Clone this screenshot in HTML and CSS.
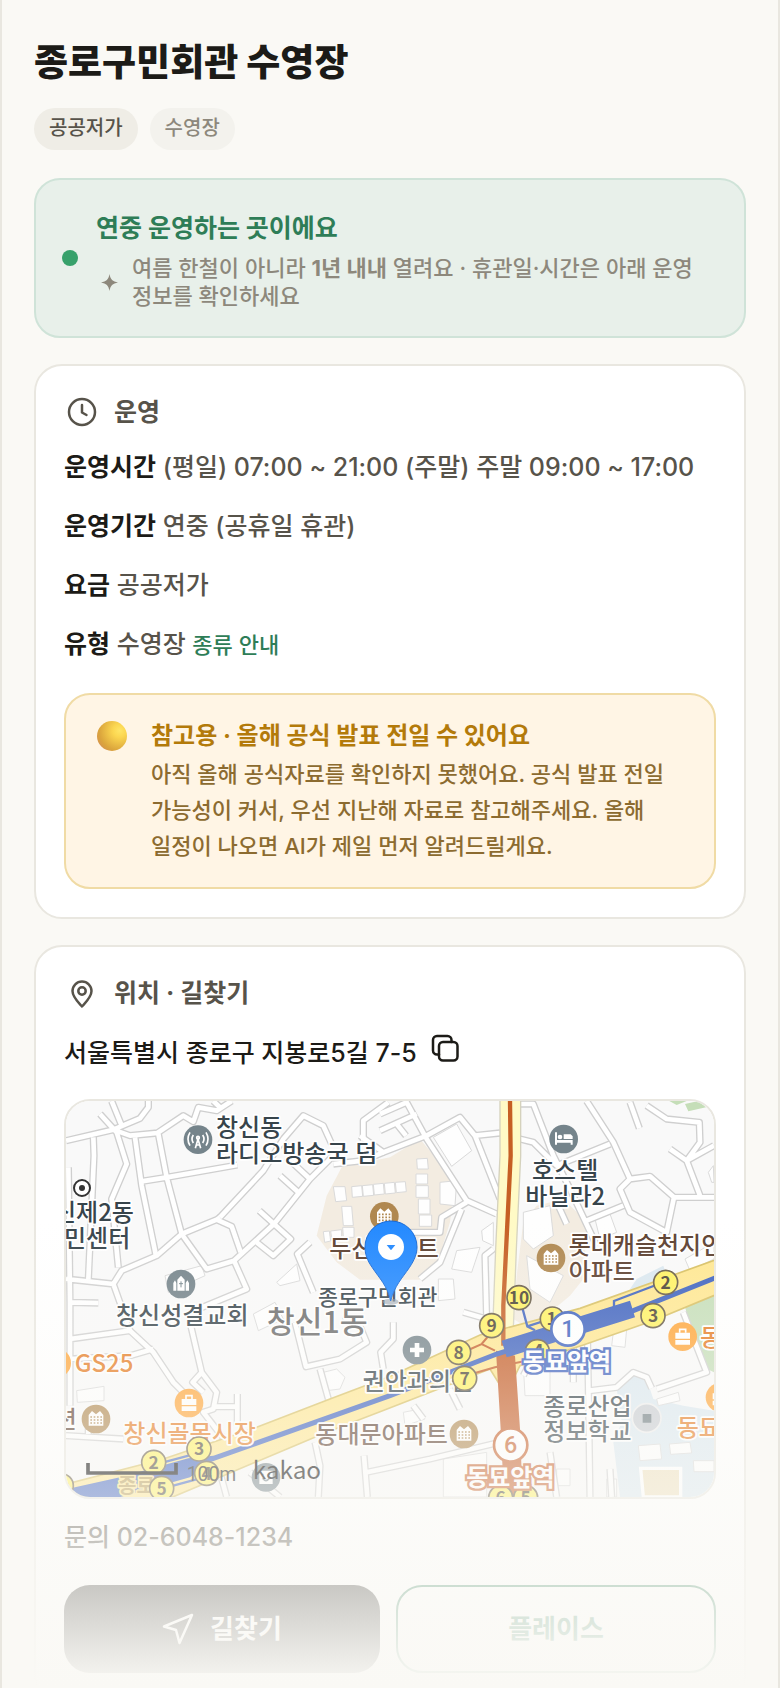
FILE: index.html
```html
<!DOCTYPE html>
<html lang="ko">
<head>
<meta charset="utf-8">
<meta name="viewport" content="width=device-width, initial-scale=1">
<title>종로구민회관 수영장</title>
<link rel="stylesheet" href="styles.css">
</head>
<body>
<main class="page">
  <h1 class="title">종로구민회관 수영장</h1>
  <div class="chips">
    <span class="chip chip-strong">공공저가</span>
    <span class="chip">수영장</span>
  </div>

  <section class="banner">
    <span class="banner-dot"></span>
    <div>
      <h2 class="banner-title">연중 운영하는 곳이에요</h2>
      <div class="banner-note">
        <svg class="spark" viewBox="0 0 24 24" aria-hidden="true"><path d="M12 0C13.200 7.500 16.500 10.800 24 12C16.500 13.200 13.200 16.500 12 24C10.800 16.500 7.500 13.200 0 12C7.500 10.800 10.800 7.500 12 0Z"/></svg>
        <p>여름 한철이 아니라 <b>1년 내내</b> 열려요 · 휴관일·시간은 아래 운영 정보를 확인하세요</p>
      </div>
    </div>
  </section>

  <section class="card">
    <h2 class="card-title">
      <svg class="icon" viewBox="0 0 36 36" aria-hidden="true"><circle cx="18" cy="18" r="13"/><path d="M18 11V18.500L22.500 21"/></svg>
      운영
    </h2>
    <div class="rows">
      <p><b>운영시간</b> (평일) 07:00 ~ 21:00 (주말) 주말 09:00 ~ 17:00</p>
      <p><b>운영기간</b> 연중 (공휴일 휴관)</p>
      <p><b>요금</b> 공공저가</p>
      <p><b>유형</b> 수영장 <a class="guide" href="#types">종류 안내</a></p>
    </div>
    <div class="notice">
      <span class="ball"></span>
      <div>
        <h3 class="notice-title">참고용 · 올해 공식 발표 전일 수 있어요</h3>
        <p>아직 올해 공식자료를 확인하지 못했어요. 공식 발표 전일 가능성이 커서, 우선 지난해 자료로 참고해주세요. 올해 일정이 나오면 AI가 제일 먼저 알려드릴게요.</p>
      </div>
    </div>
  </section>

  <section class="card">
    <h2 class="card-title">
      <svg class="icon" viewBox="0 0 36 36" aria-hidden="true"><path d="M18 31.500C14 27 8.500 22 8.500 16A9.500 9.500 0 0 1 27.500 16C27.500 22 22 27 18 31.500Z"/><circle cx="18" cy="16" r="3.700"/></svg>
      위치 · 길찾기
    </h2>
    <div class="address">
      <span>서울특별시 종로구 지봉로5길 7-5</span>
      <button class="copy" type="button" aria-label="주소 복사"><svg viewBox="0 0 28 28" aria-hidden="true"><rect x="8" y="8" width="18.500" height="18.500" rx="4"/><path d="M8 20.500H6A4 4 0 0 1 2 16.500V6A4 4 0 0 1 6 2H16.500A4 4 0 0 1 20.500 6V8"/></svg></button>
    </div>

    <div class="map">
      <svg viewBox="48 36 1944 1188" role="img" aria-label="종로구민회관 지도">
        <defs>
          <g id="roads">
            <path d="M48 155L190 122L270 88L295 55V36M185 36L215 110M150 75L200 130L230 225L185 330L205 535M130 145L132 200L115 572M190 122L240 140L322 132L400 80L430 98L445 55L500 65L545 36M490 36L515 60"/>
            <path d="M255 145L275 290L318 500M325 135L350 265L395 435L470 540L552 515L672 405L780 270L860 190M275 277L350 265L562 228M510 385L640 245L700 150L760 80L820 110L845 165M745 310L690 260M780 270L710 205M740 215L700 160"/>
            <path d="M48 570L190 585L215 545L320 500L395 435L500 392L545 412L572 490M190 585L240 725L60 750M552 515L590 600L420 670M620 460L670 500L722 450L672 405L628 365M510 385L500 392M850 225L940 215L1000 190M780 460L742 495L790 610M940 155V95L1015 40M55 235L60 640M60 640V950M60 640L145 642M60 810L240 800L310 780"/>
            <path d="M240 725L310 790L370 880L420 930M420 700L455 850L500 910L490 960L460 970L530 1060M490 953H562M562 915V1010M455 850L428 880L460 910M735 700L768 833L870 810L950 760L925 700L880 680M810 840L835 930M1000 840L992 790L1030 750V700M48 1040L220 1050M795 1060L810 1130L805 1224M942 1100L952 1224M940 1152L1140 1110L1340 1062M510 1150L530 1224M600 1150L690 1224M115 1035V970"/>
            <path d="M990 75L1070 40L1130 150L1250 335L1340 375M990 125L1100 75M1040 105L1068 140M930 140L1000 190L1130 140L1230 85L1275 140L1350 330M1275 140L1350 132M1250 340L1175 385L1170 430H1050M1235 360L1170 520L1110 570M1330 480L1305 500L1310 690L1240 670M1400 330L1345 345"/>
            <path d="M1410 45H1450L1510 200L1560 300L1640 470M1410 150L1450 160L1520 230L1680 165M1610 36L1690 160L1740 270L1710 300L1740 370L1850 430L1872 325L1800 262L1740 270M1872 325L1992 325M1790 50L1850 90L1948 100L1950 160L1910 215L1950 320M1860 180L1910 215L1992 170M1740 40L1768 118M1610 395L1720 350M1525 350L1550 405"/>
            <path d="M1612 720L1615 890L1620 1224M1620 905L1700 895L1750 850L1790 865L1805 898M1820 900L1970 850L1900 670M1500 1090L1520 1224M1570 730V880M1420 860L1440 820L1500 790M1090 950L1120 990M1200 900L1230 960M1680 1140L1685 1224"/>
          </g>
          <g id="apt">
            <circle r="43"/>
            <path fill="#fff" d="M-22 20V-12L-12 -24L0 -14L12 -24L22 -12V20Z"/>
            <path stroke="currentColor" stroke-width="5" stroke-dasharray="5 5" d="M-17 -6H19M-17 3H19M-17 12H19"/>
          </g>
          <g id="bag">
            <circle r="43" fill="#ffa538"/>
            <path fill="#fff" d="M-22 -12H22V6H-22ZM-22 10H22V24H-22Z"/>
            <path fill="none" stroke="#fff" stroke-width="5" d="M-9 -12V-22H9V-12"/>
          </g>
        </defs>

        <rect class="land" x="48" y="36" width="1944" height="1188"/>
        <path class="estate" d="M875 235L1020 205L1110 150L1215 275L1200 400L1160 530L1110 572H930L860 520L800 440L830 320ZM1160 230L1215 290L1180 390ZM1420 400L1460 350L1540 330L1612 400L1600 570L1560 620L1440 720L1390 690L1400 560Z"/>
        <path class="park" d="M1905 655L1992 620V850L1960 835ZM1858 36H1910L1880 48ZM1905 45L1945 36L1968 55L1915 67Z"/>
        <path class="school" d="M1715 1000L1700 900L1740 850L1790 870L1810 930L1900 950L1992 965V1224H1710L1690 1060ZM1740 600L1760 570L1840 530L1850 560L1770 610Z"/>
        <path class="court" d="M1772 1138H1892V1224H1780Z"/>

        <g class="building">
          <path d="M850 293H885L890 335L857 338ZM905 293L935 290L938 322L907 325ZM937 290L968 287L971 319L940 322ZM970 286L1000 283L1003 315L973 318ZM1003 283L1033 280L1036 312L1006 315ZM1036 280L1066 278L1069 308L1039 311ZM875 352H905L910 410H880ZM820 428L838 426L842 456L824 460ZM842 426L875 422V452L846 456ZM878 415H912V445H880Z"/>
          <path d="M1100 210L1132 208L1135 240H1102ZM1098 255H1133V285H1098ZM1098 290H1135V325H1098ZM1105 330H1140V375H1105ZM1108 378H1145V412H1108ZM1150 145L1220 105L1265 185L1205 232ZM1170 280L1220 275L1215 350L1170 345Z"/>
          <path d="M345 560L455 530L465 560L355 610ZM680 580L740 525L750 575L690 590ZM80 905L162 892V935L82 940ZM610 675L675 640L700 690L625 725ZM820 850L860 840L885 865L870 900L830 905Z"/>
          <path d="M1295 425L1330 400V470L1298 455ZM1220 485L1290 475L1265 550L1205 540ZM1165 570L1210 570L1215 630L1165 635ZM1420 370L1500 350L1510 440L1450 480L1420 450ZM1430 500L1540 560L1500 640L1440 600ZM1635 390L1680 375L1700 430L1650 450ZM1990 230L1975 250L1985 280H1992ZM1905 510L1992 460V510L1920 545Z"/>
          <path d="M1690 730L1730 720L1725 775L1685 770ZM1420 830L1500 810V920H1425ZM1765 1070L1830 1065L1835 1110L1770 1115ZM1858 1065L1920 1060L1925 1092L1862 1096ZM1930 1115H1992V1148H1932ZM1820 930L1885 910L1890 935L1825 950ZM1520 1140H1560V1190H1520ZM1180 1110L1310 1090V1224H1180ZM1060 970L1110 960L1125 990L1065 1010ZM1670 1170H1700V1224H1670Z"/>
        </g>

        <use href="#roads" class="road-edge"/>
        <use href="#roads" class="road-fill"/>

        <path class="avenue-edge" d="M1381 30V200L1368 480L1356 800"/>
        <path class="avenue" d="M1381 30V200L1368 480L1356 800"/>
        <path class="highway" d="M30 1190L340 1110L620 1015L840 930L1020 862L1290 738L1590 658L2010 508V612L1809 695L1600 768L1410 830L1375 900L1345 880L1320 840L990 968L830 1030L520 1160L330 1240H30Z"/>
        <path class="line6" d="M1380 36L1382 200L1360 650V770"/>
        <path class="line6-wide" d="M1338 785L1395 800L1410 1020L1418 1224H1362L1352 1020Z"/>
        <path class="line6-link" d="M1255 783L1295 765L1335 785M1295 765L1320 735M1275 852L1335 835L1430 815"/>
        <path class="line1" d="M400 1140L480 1112L1020 920L1340 795L1750 665L2000 565"/>
        <path class="line1-block" d="M1355 755L1740 635L1755 685L1370 805ZM30 1205L210 1165L415 1108L490 1100L470 1130L420 1165L190 1230H30Z"/>
        <path class="line1-link" d="M1692 655V636L1850 576M1418 660L1432 712L1455 724M1432 712L1500 690M340 1120L430 1096M370 1190L450 1168"/>

        <g class="poi">
          <circle cx="444" cy="152" r="43"/>
          <circle cx="393" cy="585" r="43"/>
          <circle cx="1541" cy="150" r="43"/>
          <circle cx="1101" cy="783" r="43"/>
          <circle cx="648" cy="1165" r="43"/>
        </g>
        <g class="glyph-line">
          <path d="M436 178L444 150L452 178M438 168H450M430 138Q422 150 430 162M458 138Q466 150 458 162M420 130Q408 150 420 170M468 130Q480 150 468 170"/>
          <circle cx="444" cy="146" r="4"/>
        </g>
        <path class="glyph" d="M382 605V572L393 560L404 572V605ZM370 605V582L375 574L379 582V605ZM407 605V582L412 574L417 582V605ZM1515 130H1521V153H1568V167H1562V161H1521V167H1515ZM1541 136H1562L1568 142V150H1541ZM1094 762H1108V776H1122V790H1108V804H1094V790H1080V776H1094ZM628 1145H668V1185H628Z"/>
        <circle class="glyph" cx="1530" cy="144" r="7"/>
        <path class="church-cross" d="M393 577V595M387 584H399"/>
        <path class="smile" d="M638 1168Q648 1182 658 1168M638 1154V1158M658 1154V1158"/>
        <g class="target"><circle cx="96" cy="297" r="24"/><circle class="target-core" cx="96" cy="297" r="9"/></g>
        <g class="apt">
          <use href="#apt" x="1003" y="382"/>
          <use href="#apt" x="1503" y="507"/>
          <use href="#apt" x="138" y="990"/>
          <use href="#apt" x="1242" y="1035"/>
        </g>
        <use href="#bag" x="417" y="942"/>
        <use href="#bag" x="1898" y="743"/>
        <use href="#bag" x="20" y="822"/>
        <use href="#bag" x="2010" y="925"/>
        <circle class="campus" cx="1790" cy="987" r="43"/>
        <path class="campus-core" d="M1778 975H1804V1001H1778Z"/>

        <g class="label">
          <text x="498" y="142">창신동</text>
          <text x="498" y="220">라디오방송국 덤</text>
          <text x="12" y="396">신제2동</text>
          <text x="42" y="474">민센터</text>
          <text x="198" y="704">창신성결교회</text>
          <text x="1446" y="270">호스텔</text>
          <text x="1426" y="348">바닐라2</text>
          <text x="938" y="902">권안과의원</text>
          <text x="1480" y="978">종로산업</text>
          <text x="1480" y="1054">정보학교</text>
          <text class="place" x="804" y="647">종로구민회관</text>
        </g>
        <g class="label label-brown">
          <text x="838" y="504">두산</text>
          <text x="1100" y="504">트</text>
          <text x="1556" y="496">롯데캐슬천지인</text>
          <text x="1556" y="574">아파트</text>
          <text x="14" y="1018">션</text>
          <text x="796" y="1062">동대문아파트</text>
        </g>
        <g class="label label-orange">
          <text x="74" y="848">GS25</text>
          <text x="220" y="1060">창신골목시장</text>
          <text x="1950" y="772">동</text>
          <text x="1880" y="1040">동묘</text>
        </g>
        <text class="label district" x="650" y="732">창신1동</text>
        <text class="label street" x="204" y="1212">종로</text>

        <g class="exit">
          <circle cx="1847" cy="580" r="36"/><text x="1847" y="599">2</text>
          <circle cx="1809" cy="680" r="36"/><text x="1809" y="699">3</text>
          <circle cx="1407" cy="626" r="36"/><text x="1407" y="645">10</text>
          <circle cx="1507" cy="690" r="36"/><text x="1505" y="709">1</text>
          <circle cx="1325" cy="710" r="36"/><text x="1325" y="729">9</text>
          <circle cx="1226" cy="790" r="36"/><text x="1226" y="809">8</text>
          <circle cx="1244" cy="868" r="36"/><text x="1244" y="887">7</text>
          <circle cx="1462" cy="788" r="36"/><text x="1465" y="803">4</text>
          <circle cx="311" cy="1120" r="36"/><text x="311" y="1139">2</text>
          <circle cx="447" cy="1080" r="36"/><text x="447" y="1099">3</text>
          <circle cx="470" cy="1153" r="36"/><text x="470" y="1172">4</text>
          <circle cx="335" cy="1198" r="36"/><text x="335" y="1217">5</text>
          <circle cx="34" cy="1190" r="36"/>
          <circle cx="1352" cy="1226" r="36"/><text x="1352" y="1245">6</text>
          <circle cx="1427" cy="1226" r="36"/><text x="1427" y="1245">5</text>
        </g>
        <g class="station station-one"><circle cx="1554" cy="720" r="50"/><text x="1554" y="745">1</text><text class="station-name" x="1551" y="844">동묘앞역</text></g>
        <g class="station station-six"><circle cx="1382" cy="1068" r="50"/><text x="1382" y="1093">6</text><text class="station-name" x="1381" y="1192">동묘앞역</text></g>

        <ellipse class="pin-shadow" cx="1022" cy="638" rx="24" ry="9"/>
        <path class="pin" d="M1022 636C1012 590 988 568 967 536C950 512 945 494 945 474A78 78 0 0 1 1101 474C1101 494 1094 512 1078 536C1056 568 1034 590 1022 636Z"/>
        <circle class="glyph" cx="1023" cy="474" r="39"/>
        <path class="pin-mark" d="M1010 468H1036L1023 484Z"/>

        <path class="scale" d="M114 1122V1152H378V1122"/>
        <text class="scale-text" x="410" y="1176">100m</text>
        <text class="brand" x="608" y="1171">kakao</text>
      </svg>
    </div>

    <p class="contact">문의 02-6048-1234</p>
    <div class="actions">
      <button class="btn btn-dark" type="button">
        <svg viewBox="0 0 32 32" aria-hidden="true"><path d="M30 2L2 13.500L14 17L17.500 30Z"/></svg>
        길찾기
      </button>
      <button class="btn btn-line" type="button">플레이스</button>
    </div>
  </section>
  <div class="fade"></div>
</main>
</body>
</html>
```
FILE: styles.css
```css
* { box-sizing: border-box; }

body {
  margin: 0;
  background: #faf9f5;
  color: #57534a;
  font-family: Inter, "Noto Sans CJK KR", sans-serif;
  font-size: 25px;
  line-height: 40px;
  font-weight: 500;
  word-break: keep-all;
}

h1, h2, h3, p { margin: 0; }
b { font-weight: 700; }
button { font: inherit; cursor: pointer; }

.page {
  position: relative;
  height: 100vh;
  overflow: hidden;
  padding: 32px 32px 0;
  border: solid #e9e7e0;
  border-width: 0 2px;
}

.title {
  color: #1c1b17;
  font-size: 37px;
  line-height: 62px;
  font-weight: 800;
}

.chips {
  display: flex;
  gap: 12px;
  margin: 14px 0 28px;
}
.chip {
  padding: 4px 15px 6px;
  border-radius: 21px;
  background: #f3f2ed;
  color: #8d887c;
  font-size: 20px;
  line-height: 32px;
}
.chip-strong { background: #efede6; color: #57534a; }

.banner {
  display: flex;
  align-items: center;
  gap: 18px;
  padding: 26px;
  border: 2px solid #cfe3d8;
  border-radius: 26px;
  background: #e8f0ea;
}
.banner-dot {
  flex: none;
  width: 16px;
  height: 16px;
  border-radius: 50%;
  background: #37a16b;
}
.banner-title {
  color: #2e7d57;
  font-size: 25px;
  line-height: 44px;
  font-weight: 700;
}
.banner-note {
  display: flex;
  align-items: center;
  gap: 14px;
  margin-top: 4px;
  padding-left: 5px;
  color: #8d887c;
  font-size: 22px;
  line-height: 28px;
}
.spark { flex: none; width: 17px; height: 17px; fill: currentColor; }

.card {
  margin-top: 26px;
  padding: 26px 28px 28px;
  border: 2px solid #e9e7e0;
  border-radius: 28px;
  background: #fff;
}
.card-title {
  display: flex;
  align-items: center;
  gap: 14px;
  font-size: 25px;
  line-height: 40px;
  font-weight: 700;
}
.icon {
  width: 36px;
  height: 36px;
  fill: none;
  stroke: currentColor;
  stroke-width: 2.5;
  stroke-linecap: round;
  stroke-linejoin: round;
}

.rows { display: grid; gap: 19px; margin-top: 15px; }
.rows b { color: #1c1b17; }
.guide { color: #2e7d57; font-size: 22px; text-decoration: none; }

.notice {
  display: flex;
  align-items: flex-start;
  gap: 24px;
  margin-top: 28px;
  padding: 21px 31px 23px;
  border: 2px solid #f0dba5;
  border-radius: 26px;
  background: #fff5e5;
  color: #8c6b30;
  font-size: 22px;
  line-height: 36px;
}
.notice-title { color: #b37a0a; font-size: 24px; line-height: 40px; font-weight: 700; }
.ball {
  flex: none;
  width: 30px;
  height: 30px;
  margin-top: 5px;
  border-radius: 50%;
  background: radial-gradient(circle at 75% 32%, #ffe566 0, #fbd650 22%, #dba53c 66%, #d28a55 92%);
}

.address {
  display: flex;
  align-items: center;
  gap: 14px;
  margin-top: 20px;
  color: #1c1b17;
}
.copy {
  display: flex;
  padding: 0 0 10px;
  border: 0;
  background: none;
  color: inherit;
}
.copy svg {
  width: 28px;
  height: 28px;
  fill: none;
  stroke: currentColor;
  stroke-width: 2.5;
  stroke-linecap: round;
}

.map {
  overflow: hidden;
  margin-top: 26px;
  border: 2px solid #e9e7e0;
  border-radius: 26px;
}
.map svg { display: block; width: 100%; height: auto; }

.land { fill: #f9f9f9; }
.estate { fill: #f3ece1; }
.park { fill: #c5deb8; }
.school { fill: #dbe8f0; }
.court { fill: #eee0bd; stroke: #fff; stroke-width: 10; }
.building { fill: #fefefe; stroke: #dadada; stroke-width: 3; }
.road-edge { fill: none; stroke: #cfcfcf; stroke-width: 22; stroke-linejoin: round; }
.road-fill { fill: none; stroke: #fff; stroke-width: 14; stroke-linejoin: round; }
.avenue-edge { fill: none; stroke: #d5d2bd; stroke-width: 66; }
.avenue { fill: none; stroke: #fffac6; stroke-width: 58; }
.highway { fill: #ffe791; stroke: #d8c062; stroke-width: 5; }
.line6 { fill: none; stroke: #c65f24; stroke-width: 13; }
.line6-wide { fill: #c65f2a; }
.line6-link { fill: none; stroke: #c65f2a; stroke-width: 6; }
.line1 { fill: none; stroke: #3e62bf; stroke-width: 15; }
.line1-block { fill: #3e62bf; }
.line1-link { fill: none; stroke: #3e62bf; stroke-width: 7; }

.poi { fill: #75848b; }
.glyph { fill: #fff; }
.glyph-line { fill: none; stroke: #fff; stroke-width: 5; }
.church-cross { stroke: #75848b; stroke-width: 3; }
.smile { fill: none; stroke: #75848b; stroke-width: 5; }
.target { fill: #fff; stroke: #333; stroke-width: 6; }
.target-core { fill: #333; stroke: none; }
.apt { fill: #b08850; color: #b08850; }
.campus { fill: #c8ccd2; stroke: #eee; stroke-width: 5; }
.campus-core { fill: #6e7b81; }

.label {
  fill: #37444b;
  stroke: #fff;
  stroke-width: 10;
  stroke-linejoin: round;
  paint-order: stroke;
  font-family: "Noto Sans CJK KR", sans-serif;
  font-size: 72px;
  font-weight: 500;
}
.place { font-size: 65px; }
.label-brown { fill: #5c4030; }
.label-orange { fill: #e57a20; }
.district { fill: #6b6b6b; font-size: 91px; }
.street { fill: #b79a50; stroke: #ffe791; font-size: 60px; font-weight: 700; }

.exit circle { fill: #fff262; stroke: #665a45; stroke-width: 5; }
.exit text {
  fill: #4a4232;
  font-family: "Noto Sans CJK KR", sans-serif;
  font-size: 52px;
  font-weight: 700;
  text-anchor: middle;
}
.station text { font-family: Roboto, sans-serif; font-size: 70px; font-weight: 500; text-anchor: middle; }
.station circle { fill: #fff; stroke-width: 8; }
.station-one { fill: #3e62bf; }
.station-one circle, .station-one .station-name { stroke: #3e62bf; }
.station-six { fill: #c65f2a; }
.station-six circle, .station-six .station-name { stroke: #c65f2a; }
.station .station-name {
  fill: #fff;
  stroke-width: 14;
  paint-order: stroke;
  font-family: "Noto Sans CJK KR", sans-serif;
  font-size: 72px;
  font-weight: 700;
}

.pin { fill: #2389ff; stroke: #1769d6; stroke-width: 3; }
.pin-mark { fill: #2389ff; }
.pin-shadow { fill: #8b97a5; opacity: 0.6; }
.scale { fill: none; stroke: #000; stroke-width: 11; }
.scale-text { fill: #222; font-family: Roboto, sans-serif; font-size: 58px; font-weight: 400; }
.brand { fill: #000; font-family: "Noto Sans CJK KR", sans-serif; font-size: 73px; font-weight: 400; }

.contact { margin-top: 18px; }
.actions { display: flex; gap: 16px; margin-top: 28px; }
.btn {
  display: flex;
  flex: 1 1 0;
  align-items: center;
  justify-content: center;
  gap: 16px;
  height: 88px;
  padding: 0;
  border-radius: 26px;
  font-size: 26px;
  font-weight: 700;
}
.btn-dark { border: 0; background: #1c1b17; color: #fff; }
.btn-dark svg {
  width: 32px;
  height: 32px;
  fill: none;
  stroke: currentColor;
  stroke-width: 2.5;
  stroke-linejoin: round;
}
.btn-line { border: 2px solid #2e7d57; background: #fff; color: #2e7d57; }

/* Softens the cut at the lower edge of the preview */
.fade {
  position: absolute;
  right: 0;
  bottom: 0;
  left: 0;
  height: 468px;
  background: linear-gradient(rgba(250, 249, 245, 0), #faf9f5);
  pointer-events: none;
}
```
